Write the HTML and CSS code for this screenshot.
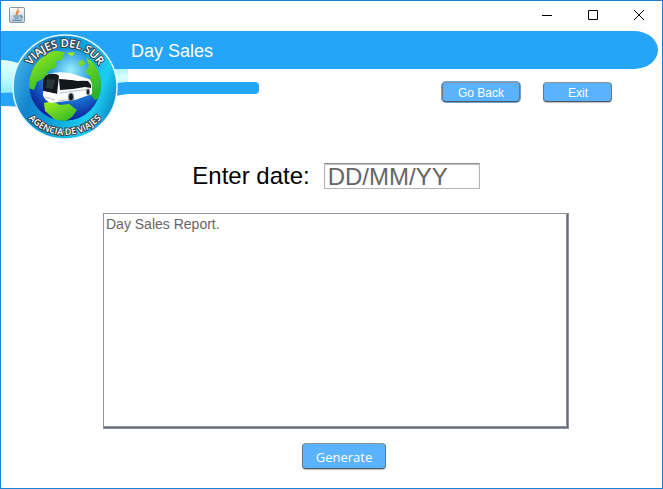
FILE: index.html
```html
<!DOCTYPE html>
<html lang="en">
<head>
<meta charset="utf-8">
<title>Day Sales</title>
<link rel="stylesheet" href="styles.css">
</head>
<body>
<div class="window">
  <div class="titlebar">
    <svg class="app-icon" viewBox="0 0 16 16" aria-hidden="true">
      <defs><linearGradient id="tile" x2="0" y2="1"><stop offset="0" stop-color="#fff"/><stop offset="1" stop-color="#b9cbd9"/></linearGradient></defs>
      <rect x=".5" y=".5" width="15" height="15" rx="1" fill="url(#tile)" stroke="#8297a6"/>
      <path d="M9 1.500C10 4 6 4.500 7.500 8M10.500 4C8 5 8 6 9 7.500" fill="none" stroke="#e8853a" stroke-width="1.300"/>
      <path d="M4 9h7M5 11h5M3.500 13.200h9M11 9c3-1 2.500 2 0 2" fill="none" stroke="#4d7896" stroke-width="1.100"/>
    </svg>
    <div class="window-buttons">
      <button class="window-button" aria-label="Minimize"><svg viewBox="0 0 10 10"><path d="M0 5.500h10"/></svg></button>
      <button class="window-button" aria-label="Maximize"><svg viewBox="0 0 10 10"><path d="M.5.5h9v9h-9z"/></svg></button>
      <button class="window-button" aria-label="Close"><svg viewBox="0 0 10 10"><path d="M0 0l10 10M10 0L0 10"/></svg></button>
    </div>
  </div>
  <header class="header">
    <h1 class="band">Day Sales</h1>
    <svg class="logo" viewBox="1 31 127 110" role="img" aria-label="Viajes del Sur">
      <defs>
        <linearGradient id="wave" x2="0" y2="1"><stop offset="0" stop-color="#e4ffff"/><stop offset=".5" stop-color="#c2fbff"/><stop offset="1" stop-color="#7deafc"/></linearGradient>
        <linearGradient id="wave-end" x2="0" y2="1"><stop offset="0" stop-color="#a9f3fb"/><stop offset=".5" stop-color="#dcfffb"/><stop offset="1" stop-color="#b4f8fa"/></linearGradient>
        <linearGradient id="ring" x1="0" y1=".3" x2="1" y2=".7"><stop offset="0" stop-color="#45b4ea"/><stop offset=".25" stop-color="#1284cd"/><stop offset=".45" stop-color="#0a9ad8"/><stop offset=".8" stop-color="#1ccdf0"/><stop offset="1" stop-color="#0a86c4"/></linearGradient>
        <radialGradient id="sea" cx=".58" cy=".3" r=".7"><stop offset="0" stop-color="#9af0fa"/><stop offset=".45" stop-color="#2190e6"/><stop offset="1" stop-color="#09209a"/></radialGradient>
        <linearGradient id="land" x2=".6" y2="1"><stop offset="0" stop-color="#a5f01c"/><stop offset="1" stop-color="#28b52b"/></linearGradient>
        <clipPath id="globe"><circle cx="65" cy="85" r="36"/></clipPath>
        <path id="arc-top" d="M25 87a40 40 0 0 1 80 0"/>
        <path id="arc-bottom" d="M17 87a48 48 0 0 0 96 0"/>
      </defs>
      <path d="M1 69h127v72H1z" fill="#fff"/>
      <path d="M1 60q9 0 20 4v32q-10-1-20 0z" fill="url(#wave)"/>
      <path d="M1 93q10-1 20 0v14q-10-1-20-1z" fill="#25a5f7"/>
      <path d="M108 69h20v13q-9 0-20 3z" fill="url(#wave-end)"/>
      <path d="M108 85q12-3 20-3v12q-10 1-20 4z" fill="#25a5f7"/>
      <circle cx="65" cy="87" r="52" fill="url(#ring)" stroke="#e4f8ff" stroke-width="1.500"/>
      <g clip-path="url(#globe)">
        <circle cx="65" cy="85" r="36" fill="url(#sea)"/>
        <path d="M28 88l2-17 8-14 13-7 14 2-3 8-6 1 1 6-7 3-6 8-7 4-3 8z" fill="url(#land)"/>
        <path d="M67 53l8-1-3 5zM86 57l8 6 8 12v22l-7 3-7-8-1-9 4-6-6-5 4-6zM78 62l5-2 2 4-5 3z" fill="url(#land)"/>
        <path d="M44 103l8-2 8 4 9-1 8 6-5 7-8 5-5 4-6-8-8-7z" fill="url(#land)"/>
      </g>
      <path d="M44 80q0-4 4-6 10-3 22-1l19 6q3 2 3 8v7l-17 6-24 3q-6-2-8-8z" fill="#fbfcfd"/>
      <path d="M43 82q1-7 6-8 8-1 10 2l-2 18-14-3z" fill="#15191c"/>
      <path d="M47 79l8 1-2 9-7-1z" fill="#2b363b"/>
      <path d="M59 79l29 2 3 4v3l-6-1-12 2-13 1z" fill="#12171a"/>
      <path d="M60 75l10-1 18 6-10 1-19-3z" fill="#fff"/>
      <path d="M43 91l14 3v7l-5 1q-7-2-9-7z" fill="#fff"/>
      <path d="M45 97l10 3M60 93l30-4M58 101l17-2" fill="none" stroke="#a4b1b8" stroke-width=".8"/>
      <g fill="#15191c" stroke="#818c91"><ellipse cx="71" cy="97" rx="2.500" ry="4"/><ellipse cx="88" cy="92" rx="1.500" ry="3"/></g>
      <g class="logo-text">
        <text font-size="11"><textPath href="#arc-top" startOffset="50%" text-anchor="middle">VIAJES DEL SUR</textPath></text>
        <text font-size="9"><textPath href="#arc-bottom" startOffset="50%" text-anchor="middle">AGENCIA DE VIAJES</textPath></text>
      </g>
    </svg>
    <div class="toolbar">
      <div class="stripe"></div>
      <nav class="actions">
        <button class="button focused">Go Back</button>
        <button class="button exit">Exit</button>
      </nav>
    </div>
  </header>
  <main class="main">
    <div class="date-row">
      <label for="date">Enter date:</label>
      <input class="date" id="date" type="text" value="DD/MM/YY">
    </div>
    <textarea class="report" aria-label="Report">Day Sales Report.</textarea>
    <button class="button generate">Generate</button>
  </main>
</div>
</body>
</html>
```
FILE: styles.css
```css
* { box-sizing: border-box; }

body {
  margin: 0;
  font-family: "Liberation Sans", Arial, sans-serif;
  background: #fff;
}

.window {
  display: flex;
  flex-direction: column;
  min-height: 100vh;
  border: 1px solid #1883d7;
}

.titlebar {
  display: flex;
  justify-content: space-between;
  height: 30px;
  padding-left: 8px;
}

.app-icon {
  width: 16px;
  height: 16px;
  margin-top: 6px;
}

.window-buttons { display: flex; }

.window-button {
  display: grid;
  place-items: center;
  width: 46px;
  height: 28px;
  padding: 0;
  border: 0;
  background: none;
}

.window-button svg {
  width: 10px;
  height: 10px;
  fill: none;
  stroke: #000;
}

.header {
  display: grid;
  grid-template-columns: 127px 1fr;
  grid-template-rows: 38px 72px;
}

.band {
  grid-area: 1 / 1 / 2 / 3;
  margin: 0 4px 0 0;
  padding-left: 130px;
  border-radius: 0 24px 24px 0 / 0 19px 19px 0;
  background: #25a5f7;
  color: #fff;
  font-size: 18px;
  font-weight: 400;
  line-height: 40px;
}

.logo {
  grid-area: 1 / 1 / 3 / 2;
  width: 127px;
  height: 110px;
}

.logo-text {
  fill: #fff;
  stroke: #3a454d;
  stroke-width: 2px;
  paint-order: stroke;
  font-family: "Open Sans", sans-serif;
  font-weight: 600;
}

.toolbar {
  display: flex;
  justify-content: space-between;
  align-items: flex-start;
  padding: 13px 50px 0 0;
}

.stripe {
  width: 131px;
  height: 12px;
  border-radius: 0 4px 4px 0;
  background: #25a5f7;
}

.actions {
  display: flex;
  gap: 23px;
}

.button {
  height: 20px;
  padding: 0 15px;
  border: 1px solid;
  border-color: #8d9399 #6c7780 #4c5862;
  border-radius: 4px;
  background: #5ab3ff;
  box-shadow: 0 1px 1px #bbb;
  color: #fff;
  font: 12px/20px "Liberation Sans", Arial, sans-serif;
}

.focused { box-shadow: 0 0 0 1px #73a4d1; }

.exit { padding: 0 23px 0 24px; }

.main {
  display: flex;
  flex: 1;
  flex-direction: column;
  align-items: center;
  gap: 24px;
  padding: 22px 0 19px 9px;
}

.date-row {
  display: flex;
  align-items: center;
  gap: 14px;
  font-size: 24px;
  line-height: 26px;
}

.date {
  width: 156px;
  height: 26px;
  padding: 1px 3px 0;
  border: 1px solid #b5b5b5;
  border-top-color: #8f8f8f;
  box-shadow: inset 0 1px 1px #bbb;
  color: #666;
  font: 24px/24px "Liberation Sans", Arial, sans-serif;
}

.report {
  flex: 1;
  width: 100%;
  max-width: 466px;
  min-height: 120px;
  padding: 2px;
  border: 1px solid #9194a0;
  box-shadow: inset -1px -1px #666a75, inset -2px -2px #9194a0;
  resize: none;
  color: #666;
  font: 14px/16px "Liberation Sans", Arial, sans-serif;
}

.generate {
  height: 26px;
  margin: -10px 0 0 16px;
  padding: 0 13px;
  font: 13px/26px "Open Sans", sans-serif;
}
```
